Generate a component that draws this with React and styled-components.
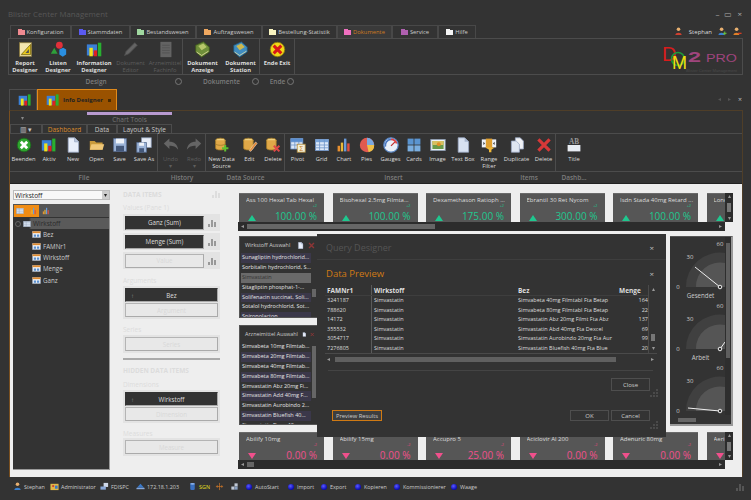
import React from "react";
import styled, { createGlobalStyle } from "styled-components";

const Global = createGlobalStyle`
  html, body { margin: 0; padding: 0; background: #333; }
  * { box-sizing: border-box; }
  body { font-family: "Open Sans", "Liberation Sans", sans-serif; }
`;

// --- icons, all on a 20x20 grid ---
const icons = {
  report: <><rect x="3" y="2" width="14" height="16" fill="#f3e6b0" stroke="#8a7a40" /><path d="M5 16 L16 4 V16Z" fill="#e8c81e" stroke="#7a6a10" /><path d="M10 14 L14 9.5 V14Z" fill="#555" /></>,
  lists: <><circle cx="11" cy="5" r="4" fill="#e0303a" /><path d="M1 15 L5 8 L9 15Z" fill="#2ea03a" /><path d="M11 10 L15.500 8 L19 10 V16 L15 18.500 L11 16Z" fill="#2a8fe0" /></>,
  info: <><rect x="1" y="4" width="12" height="13" fill="#3a80d8" /><rect x="4" y="8" width="4" height="10" fill="#f2e21a" /><rect x="9" y="11" width="4" height="7" fill="#e02020" /><rect x="14" y="2" width="4" height="16" fill="#28b030" /></>,
  pencil: <path d="M3 17 L5 12 L15 2 L18 5 L8 15Z" fill="#8c8c8c" stroke="#666" />,
  doc: <><rect x="4" y="1" width="13" height="18" fill="#8b8b8b" /><path d="M6 5H15M6 8H15M6 11H15M6 14H15" stroke="#6a6a6a" /></>,
  bookGreen: <><path d="M2 5 L11 1 L18 7 V13 L9 19 L2 13Z" fill="#6f8f3a" stroke="#3f5a1c" /><path d="M5 6 L11 3 L15 7 L9 11Z" fill="#b7c76a" /><path d="M3 13 L9 17 L17 12" stroke="#e0d8a0" fill="none" /></>,
  bookBlue: <><path d="M2 5 L11 1 L18 7 V13 L9 19 L2 13Z" fill="#3f8cc0" stroke="#20506f" /><path d="M5 6 L11 3 L15 7 L9 11Z" fill="#cdb84e" /><path d="M3 13 L9 17 L17 12" stroke="#e0d8a0" fill="none" /></>,
  exit: <><circle cx="10" cy="10" r="8.500" fill="#f0d818" stroke="#8a7a10" /><path d="M5.500 5.500 L14.500 14.500M14.500 5.500 L5.500 14.500" stroke="#d81818" strokeWidth="3.500" /></>,
  close: <><circle cx="10" cy="10" r="8.500" fill="#2fa52f" stroke="#1c6a1c" /><path d="M6 6 L14 14M14 6 L6 14" stroke="#fff" strokeWidth="3.500" /></>,
  page: <><path d="M4 1 H12 L17 6 V19 H4Z" fill="#e8eefa" stroke="#9aa8c4" /><path d="M12 1 V6 H17" fill="#bcc8de" stroke="#9aa8c4" /></>,
  folder: <><path d="M1 5 H7 L9 7 H17 V16 H1Z" fill="#c89a3c" /><path d="M3 9 H19 L17 16 H1Z" fill="#f0c878" /></>,
  save: <><path d="M2 2 H18 V18 H2Z" fill="#9cb4d8" stroke="#5a7094" /><rect x="5" y="2" width="10" height="6" fill="#eef2f8" /><rect x="5" y="11" width="10" height="7" fill="#44587a" /></>,
  saveAs: <><rect x="7" y="1" width="12" height="12" fill="#e8eef8" stroke="#8a9ab4" /><rect x="1" y="7" width="12" height="12" fill="#9cb4d8" stroke="#5a7094" /><rect x="4" y="7" width="6" height="4" fill="#eef2f8" /><rect x="4" y="14" width="6" height="5" fill="#44587a" /></>,
  undo: <path d="M1 8 L8 2 V6 C14 6 18 9 19 16 C16 12 13 11 8 11 V15Z" fill="#8e8e8e" />,
  redo: <path d="M19 8 L12 2 V6 C6 6 2 9 1 16 C4 12 7 11 12 11 V15Z" fill="#8e8e8e" />,
  dbAdd: <><ellipse cx="8" cy="4" rx="6" ry="2.500" fill="#f0d080" stroke="#a07828" /><path d="M2 4 V14 C2 17 14 17 14 14 V4" fill="#e0a848" stroke="#a07828" /><path d="M2 8.500 C4 11 12 11 14 8.500" fill="none" stroke="#a07828" /><path d="M14 10 V18M10 14 H18" stroke="#60c030" strokeWidth="2.500" /></>,
  dbEdit: <><ellipse cx="8" cy="4" rx="6" ry="2.500" fill="#f0d080" stroke="#a07828" /><path d="M2 4 V14 C2 17 14 17 14 14 V4" fill="#e0a848" stroke="#a07828" /><path d="M9 17 L17 6 L19 8 L11 18Z" fill="#e08838" stroke="#fff" strokeWidth=".5" /></>,
  dbDel: <><ellipse cx="8" cy="4" rx="6" ry="2.500" fill="#f0d080" stroke="#a07828" /><path d="M2 4 V14 C2 17 14 17 14 14 V4" fill="#e0a848" stroke="#a07828" /><path d="M11 11 L18 18M18 11 L11 18" stroke="#e04848" strokeWidth="2.500" /></>,
  pivot: <><rect x="1" y="2" width="15" height="13" fill="#dce8f8" stroke="#6f94c8" /><path d="M1 6H16M6 2V15M11 2V15M1 10H16" stroke="#6f94c8" /><rect x="1" y="2" width="15" height="4" fill="#5a8ed0" /><rect x="9" y="9" width="10" height="10" fill="#f4f0d8" stroke="#b08838" /><text x="14" y="17.500" fontSize="8" fill="#c87818" textAnchor="middle">Σ</text></>,
  grid: <><rect x="2" y="3" width="16" height="14" fill="#dce8f8" stroke="#6f94c8" /><rect x="2" y="3" width="16" height="3.500" fill="#7aa4d8" /><path d="M2 10H18M2 13.500H18M7 3V17M13 3V17" stroke="#6f94c8" /></>,
  chart: <><rect x="2" y="11" width="3" height="7" fill="#e89030" /><rect x="6" y="7" width="3" height="11" fill="#e8b838" /><rect x="10" y="2" width="3" height="16" fill="#6a9ad8" /><rect x="14" y="8" width="3" height="10" fill="#e05040" /></>,
  pies: <><circle cx="10" cy="10" r="9" fill="#e05a50" /><path d="M10 10 L10 1 A9 9 0 0 1 19 10Z" fill="#7aa8e0" /><path d="M10 10 L19 10 A9 9 0 0 1 12 19Z" fill="#f0c048" /></>,
  gauges: <><circle cx="10" cy="10" r="9" fill="#eaf0f8" stroke="#5a88c8" strokeWidth="1.500" /><path d="M3 12 A7.500 7.500 0 0 1 10 3" stroke="#4a78c0" strokeWidth="2" fill="none" /><path d="M10 3 A7.500 7.500 0 0 1 17 8" stroke="#e04040" strokeWidth="2" fill="none" /><path d="M10 11 L15 6" stroke="#c03030" strokeWidth="1.500" /></>,
  cards: <><rect x="2" y="2" width="7.500" height="7.500" fill="#5a94d0" /><rect x="10.500" y="2" width="7.500" height="7.500" fill="#5a94d0" /><rect x="2" y="10.500" width="7.500" height="7.500" fill="#7aaee0" /><rect x="10.500" y="10.500" width="7.500" height="7.500" fill="#7aaee0" /></>,
  image: <><rect x="1" y="3" width="18" height="14" fill="#eef2f6" stroke="#8a9ab0" /><rect x="3" y="5" width="14" height="10" fill="#6a9a48" /><rect x="3" y="5" width="14" height="5" fill="#d8c060" /><circle cx="11" cy="9" r="2.500" fill="#e09028" /></>,
  textBox: <><path d="M4 1 H12 L17 6 V19 H4Z" fill="#d8e2f2" stroke="#9aa8c4" /><path d="M12 1 V6 H17" fill="#aab8d0" /></>,
  range: <><rect x="1" y="3" width="18" height="10" fill="#eef2f8" /><rect x="6" y="2" width="8" height="12" fill="#e0a030" /><path d="M5 8 L3 6V10Z M15 8 L17 6V10Z" fill="#333" /><path d="M6 13 H17 L13 16 V19 H10 V16Z" fill="#f0b838" /></>,
  dup: <><path d="M8 1 H14 L18 5 V15 H8Z" fill="#f0f2f6" stroke="#9aa8c4" /><path d="M3 5 H9 L13 9 V19 H3Z" fill="#dfe6f2" stroke="#9aa8c4" /></>,
  del: <path d="M3 3 L17 17M17 3 L3 17" stroke="#d83838" strokeWidth="4" />,
  title: <><text x="10" y="9" fontSize="9" fontWeight="700" fill="#999" textAnchor="middle" fontFamily="Liberation Serif, serif">AB</text><rect x="2" y="10" width="16" height="8" fill="#e8ecf2" /></>,
  user: <><circle cx="10" cy="5" r="4" fill="#e8b070" /><path d="M3 18 C3 11 17 11 17 18Z" fill="#3a80d0" /></>,
  userRed: <><circle cx="10" cy="5" r="4" fill="#e8b070" /><path d="M3 18 C3 11 17 11 17 18Z" fill="#d04030" /></>,
  userAdd: <><circle cx="8" cy="5" r="4" fill="#e8b070" /><path d="M1 18 C1 11 14 11 14 18Z" fill="#3a80d0" /><path d="M15 10V18M11 14H19" stroke="#70d040" strokeWidth="2" /></>,
  userOut: <><circle cx="8" cy="5" r="4" fill="#e8b070" /><path d="M1 18 C1 11 14 11 14 18Z" fill="#e08028" /><path d="M11 14H19" stroke="#f04020" strokeWidth="2.500" /></>,
  admin: <><rect x="1" y="4" width="18" height="14" fill="#e0b848" /><circle cx="7" cy="9" r="2.500" fill="#d04030" /><rect x="11" y="8" width="6" height="7" fill="#3a78c8" /></>,
  server: <><rect x="8" y="2" width="10" height="9" fill="#cfd8e8" /><rect x="1" y="10" width="12" height="7" fill="#8aa8d8" /></>,
  net: <><path d="M10 4 L18 13 H2Z" fill="#3a78c8" /><rect x="1" y="13" width="18" height="3" fill="#8aa8d8" /></>,
  db: <><rect x="5" y="2" width="10" height="16" rx="3" fill="#3a70c0" /><ellipse cx="10" cy="4" rx="5" ry="2" fill="#8ab0e8" /></>,
  plug: <path d="M10 2V18M2 10H18M5 7V13M15 7V13" stroke="#d07828" strokeWidth="1.500" fill="none" />,
  blocks: <><rect x="10" y="3" width="7" height="7" fill="#c0c8d4" /><rect x="3" y="10" width="7" height="7" fill="#c0c8d4" /><rect x="10" y="10" width="7" height="7" fill="#8aa0c0" /></>,
  tree: <><rect x="1" y="3" width="18" height="14" fill="#f0f2f6" stroke="#8a9ab0" /><rect x="1" y="3" width="18" height="4" fill="#e08c30" /><rect x="4" y="10" width="5" height="5" fill="#5a90d0" /><rect x="11" y="10" width="5" height="5" fill="#5a90d0" /></>,
  table: <><rect x="1" y="3" width="18" height="14" fill="#dce6f4" stroke="#8a9ab0" /><path d="M1 7H19M1 12H19M8 3V17" stroke="#8a9ab0" /></>,
};

const Icon = ({ name, size = 16, dim }) => (
  <svg width={size} height={size} viewBox="0 0 20 20" style={dim ? { opacity: 0.55 } : undefined}>
    {icons[name]}
  </svg>
);

const Folder = ({ color }) => (
  <svg width="7" height="6" viewBox="0 0 7 6">
    <rect y="0" width="7" height="6" fill={color} />
    <rect y="0" width="3" height="1" fill="#333" x="4" />
  </svg>
);

const Bars = ({ color = "#999" }) => (
  <svg width="8" height="8" viewBox="0 0 8 8">
    <path d="M0 5h2v3H0zM3 1h2v7H3zM6 3h2v5H6z" fill={color} />
  </svg>
);

const arrowPaths = { up: "M0 3 L1.500 0 L3 3Z", down: "M0 0 L3 0 L1.500 3Z", left: "M3 0 V3 L0 1.500Z", right: "M0 0 V3 L3 1.500Z" };

const Arrow = ({ dir, color = "#999" }) => (
  <svg width="3" height="3" viewBox="0 0 3 3" style={{ flex: "none" }}>
    <path d={arrowPaths[dir]} fill={color} />
  </svg>
);

const Grip = () => (
  <svg width="8" height="8" viewBox="0 0 8 8">
    <path d="M6 0h2v2H6zM3 3h2v2H3zM6 3h2v2H6zM0 6h2v2H0zM3 6h2v2H3zM6 6h2v2H6z" fill="#4a4a4a" />
  </svg>
);

// --- frame ---
const Page = styled.div`
  position: relative;
  width: 751px;
  height: 500px;
  overflow: hidden;
  background: #333;
  display: flex;
  flex-direction: column;
  color: #ddd;
  font-size: 6.5px;
`;

const TitleBar = styled.div`
  height: 25px;
  flex: none;
  display: flex;
  align-items: center;
  justify-content: space-between;
  padding: 3px 9px 0 8px;
  color: #575757;
  font-size: 7.800px;
`;

const WinButtons = styled.div`
  display: flex;
  gap: 5px;
  color: #aaa;
  font-size: 8px;
  line-height: 8px;
`;

const MenuRow = styled.div`
  height: 13px;
  flex: none;
  display: flex;
  align-items: flex-end;
  padding-left: 10px;
`;

const MenuTab = styled.div`
  width: ${(p) => p.$w}px;
  height: 13px;
  display: flex;
  align-items: center;
  justify-content: center;
  gap: 2px;
  border: 1px solid #484848;
  border-bottom: 0;
  font-size: 5.800px;
  color: ${(p) => (p.$active ? "#d07a20" : "#ccc")};
  background: ${(p) => (p.$active ? "#3a3a3a" : "transparent")};
`;

const UserArea = styled.div`
  margin-left: auto;
  margin-right: 9px;
  display: flex;
  align-items: center;
  gap: 6px;
  font-size: 6px;
  color: #ddd;
  height: 13px;
`;

const TopRibbon = styled.div`
  height: 37px;
  flex: none;
  margin: 0 8px;
  border: 1px solid #4c4c4c;
  display: flex;
  position: relative;
`;

const Group = styled.div`
  display: flex;
  width: ${(p) => p.$w}px;
  border-right: 1px solid ${(p) => (p.$noline ? "transparent" : "#4c4c4c")};
  flex: none;
`;

const ToolButton = styled.div`
  width: ${(p) => p.$w}px;
  flex: none;
  display: flex;
  flex-direction: column;
  align-items: center;
  text-align: center;
  padding-top: ${(p) => p.$pad}px;
  line-height: 7px;
  font-size: 5.800px;
  font-weight: ${(p) => (p.$bold ? 700 : 400)};
  color: ${(p) => (p.$off ? "#5e5e5e" : "#ddd")};
  white-space: nowrap;
  svg { margin-bottom: ${(p) => p.$gap}px; flex: none; }
`;

const CaptionRow = styled.div`
  height: ${(p) => p.$h}px;
  flex: none;
  display: flex;
  margin: ${(p) => p.$m || 0};
`;

const Caption = styled.div`
  width: ${(p) => p.$w}px;
  flex: none;
  display: flex;
  align-items: center;
  justify-content: center;
  position: relative;
  font-size: 6.500px;
  font-weight: 600;
  color: #7c7c7c;
  white-space: nowrap;
`;

const Collapse = styled.i`
  position: absolute;
  right: 1px;
  top: 3px;
  width: 7px;
  height: 7px;
  border: 1px solid #777;
  border-radius: 50%;
`;

const Logo = styled.svg`
  position: absolute;
  right: 0;
  top: 2px;
`;

const DocTabs = styled.div`
  height: 22px;
  flex: none;
  display: flex;
  align-items: flex-end;
  padding-left: 9px;
  padding-right: 9px;
`;

const DocTab = styled.div`
  width: ${(p) => p.$w}px;
  height: 21px;
  display: flex;
  align-items: center;
  padding-left: 8px;
  gap: 3px;
  font-size: 6px;
  font-weight: 700;
  color: #222;
  border: 1px solid ${(p) => (p.$active ? "#e08a1c" : "#4c4c4c")};
  border-bottom: 0;
  background: ${(p) => (p.$active ? "#9a5200" : "transparent")};
  em { margin-left: auto; margin-right: 5px; width: 3px; height: 3px; background: #4a2a00; }
`;

const DocArrows = styled.div`
  margin-left: auto;
  align-self: center;
  display: flex;
  align-items: center;
  gap: 7px;
  font-size: 7px;
  b { color: #bbb; font-weight: 400; }
`;

const Panel = styled.div`
  height: 367px;
  flex: none;
  margin: 0 8px 0 9px;
  border-top: 1px solid #4f3e28;
  border-right: 1px solid #4f3e28;
  border-left: 1px solid #7a5020;
  display: flex;
  flex-direction: column;
`;

const ChartRow = styled.div`
  height: 13px;
  flex: none;
  display: flex;
  align-items: flex-start;
  padding-left: 11px;
  svg { margin-top: 6px; margin-right: 63px; }
`;

const ChartStrip = styled.div`
  width: 85px;
  height: 13px;
  border-top: 3px solid #b89ad0;
  margin-top: 1px;
  text-align: center;
  font-size: 6.500px;
  color: #777;
  line-height: 9px;
`;

const ContextTabs = styled.div`
  height: 10px;
  flex: none;
  display: flex;
  border-bottom: 1px solid #4c4c4c;
`;

const ContextTab = styled.div`
  width: ${(p) => p.$w}px;
  display: flex;
  align-items: center;
  justify-content: center;
  font-size: 6.500px;
  color: ${(p) => (p.$active ? "#d98a2b" : "#c8c8c8")};
  border: 1px solid #4c4c4c;
  border-bottom: 0;
`;

const LowerRibbon = styled.div`
  height: 38px;
  flex: none;
  display: flex;
  border-bottom: 1px solid #4c4c4c;
`;

const Content = styled.div`
  flex: 1;
  min-height: 0;
  background: #eee;
  border-top: 1px solid #222;
  display: flex;
  overflow: hidden;
`;

// --- left side ---
const LeftColumn = styled.div`
  width: 97px;
  margin-left: 3px;
  flex: none;
  padding-top: 6px;
  display: flex;
  flex-direction: column;
`;

const Combo = styled.div`
  height: 10px;
  background: #f8f8f8;
  border: 1px solid #bbb;
  display: flex;
  align-items: center;
  justify-content: space-between;
  padding-left: 1px;
  color: #222;
  font-size: 6.500px;
  span { width: 7px; height: 8px; background: #ccc; display: flex; align-items: center; justify-content: center; }
`;

const Tree = styled.div`
  margin-top: 4px;
  height: 266px;
  background: #333;
  border-right: 1px solid #999;
  border-bottom: 1px solid #999;
`;

const TreeBar = styled.div`
  height: 13px;
  background: #555;
  display: flex;
  align-items: center;
  padding-left: 1px;
  gap: 1px;
`;

const TreeTool = styled.div`
  width: ${(p) => (p.$active ? 25 : 12)}px;
  height: 12px;
  background: ${(p) => (p.$active ? "#f08c14" : "transparent")};
  display: flex;
  align-items: center;
  justify-content: space-around;
`;

const TreeRoot = styled.div`
  margin-top: 1px;
  height: 11px;
  display: flex;
  align-items: center;
  padding-left: 2px;
  gap: 2px;
  background: linear-gradient(to right, #333 16px, #5a5a5a 18px);
  color: #2a2a2a;
  font-size: 6.500px;
  i { width: 6px; height: 6px; border: 1px solid #666; border-radius: 50%; }
`;

const TreeLeaf = styled.div`
  height: 11.400px;
  display: flex;
  align-items: center;
  padding-left: 19px;
  gap: 2px;
  color: #ccc;
  font-size: 6.200px;
  &:first-of-type { margin-top: 1px; }
`;

const MidColumn = styled.div`
  width: 128px;
  flex: none;
  padding: 5px 18px 0 13px;
`;

const Section = styled.div`
  height: 10px;
  margin-top: ${(p) => p.$top}px;
  display: flex;
  align-items: center;
  justify-content: space-between;
  font-size: 6.500px;
  font-weight: ${(p) => (p.$bold ? 700 : 400)};
  color: #dcdcdc;
  white-space: nowrap;
`;

const SlotGroup = styled.div`
  margin-top: ${(p) => p.$top ?? 0}px;
  background: #e3e3e3;
  padding: 2px;
  display: flex;
  flex-direction: column;
  gap: 1px;
`;

const ValueRow = styled.div`
  margin-top: ${(p) => p.$top}px;
  background: #e3e3e3;
  height: 17px;
  padding: 1px 4px 1px 2px;
  display: flex;
  align-items: center;
  justify-content: space-between;
`;

const ItemButton = styled.div`
  height: ${(p) => p.$h || 14}px;
  width: ${(p) => (p.$short ? "79px" : "100%")};
  position: relative;
  display: flex;
  align-items: center;
  justify-content: center;
  font-size: 6.200px;
  color: ${(p) => (p.$empty ? "#d8d8d8" : "#ddd")};
  background: ${(p) => (p.$empty ? "#e8e8e8" : "#333")};
  border: 1px solid ${(p) => (p.$empty ? "#b4b4b4" : "#333")};
  border-right-color: #aaa;
  border-bottom-color: #aaa;
  i { position: absolute; left: 5px; font-style: normal; color: #999; }
`;

const Divider = styled.div`
  height: 2px;
  margin-top: 5px;
  background: #aaa;
`;

// --- dashboard ---
const Canvas = styled.div`
  flex: 1;
  min-width: 0;
  padding: 9px 0 0 0;
`;

const CardBlock = styled.div`
  width: 495px;
  margin-top: ${(p) => p.$top || 0}px;
  display: grid;
  grid-template-columns: 487px 8px;
  grid-template-rows: ${(p) => p.$rows};
`;

const CardStrip = styled.div`
  display: flex;
  gap: 8.500px;
  padding-left: 1px;
  overflow: hidden;
  background: #eee;
`;

const Card = styled.div`
  width: 85px;
  height: 100%;
  flex: none;
  background: #565656;
  border-top: 1px solid #6a6a6a;
  padding: 2px 3px 0 7px;
  position: relative;
  overflow: hidden;
`;

const CardTitle = styled.div`
  font-size: 6px;
  line-height: 8px;
  color: #dcdcdc;
  white-space: nowrap;
  overflow: hidden;
`;

const CardDelta = styled.div`
  font-size: 3.800px;
  line-height: 4px;
  text-align: right;
  padding-right: 4px;
  color: ${(p) => p.$color};
`;

const CardValue = styled.div`
  position: absolute;
  right: 7px;
  bottom: ${(p) => p.$b}px;
  font-size: 10px;
  line-height: 10px;
  color: ${(p) => p.$color};
  white-space: nowrap;
`;

const Triangle = styled.span`
  position: absolute;
  left: 9px;
  bottom: ${(p) => p.$b}px;
  width: 0;
  height: 0;
  border-left: 4.500px solid transparent;
  border-right: 4.500px solid transparent;
  ${(p) => (p.$down ? `border-top: 6px solid #f0508c;` : `border-bottom: 6px solid #1fc78f;`)}
`;

const VScroll = styled.div`
  background: #2c2c2c;
  display: flex;
  flex-direction: column;
  align-items: center;
  justify-content: space-between;
  padding: 2px 0;
  b { width: 4px; height: ${(p) => p.$thumb}px; background: #777; }
`;

const HScroll = styled.div`
  grid-column: 1;
  height: 9px;
  background: #2c2c2c;
  display: flex;
  align-items: center;
  padding: 0 3px;
  b { width: ${(p) => p.$thumb}px; height: 5px; background: #666; margin: 0 auto 0 3px; }
`;

const MiddleRow = styled.div`
  width: 495px;
  height: 189px;
  margin-top: 5px;
  padding-left: 1px;
  display: flex;
  justify-content: space-between;
`;

const ListColumn = styled.div`
  width: 79px;
  display: flex;
  flex-direction: column;
  gap: 7px;
`;

const ListPanel = styled.div`
  height: ${(p) => p.$h}px;
  background: #333;
  border: 1px solid #555;
  display: flex;
  flex-direction: column;
  overflow: hidden;
`;

const ListHead = styled.div`
  height: 16px;
  flex: none;
  display: flex;
  align-items: center;
  padding: 0 2px 0 5px;
  gap: 4px;
  font-size: 5.400px;
  color: #ccc;
  white-space: nowrap;
  span { margin-right: auto; }
`;

const ListBody = styled.div`
  flex: 1;
  min-height: 0;
  display: flex;
  overflow: hidden;
`;

const ListItems = styled.div`
  flex: 1;
  min-width: 0;
  padding-left: 1px;
`;

const ListItem = styled.div`
  height: 9.900px;
  line-height: 9.900px;
  font-size: 5.500px;
  padding-left: 1px;
  white-space: nowrap;
  overflow: hidden;
  color: ${(p) => (p.$on ? "#333" : "#e4e4e4")};
  background: ${(p) => (p.$on ? "#6a6a6a" : p.$alt ? "#3b384a" : "#333")};
`;

const ListScroll = styled.div`
  width: 6px;
  flex: none;
  display: flex;
  flex-direction: column;
  padding-top: ${(p) => p.$top}px;
  align-items: center;
  b { width: 4px; height: ${(p) => p.$thumb}px; background: #666; }
`;

const GaugePanel = styled.div`
  width: 63px;
  height: 190px;
  background: #333;
  border-right: 2px solid #999;
  border-bottom: 2px solid #999;
  border-top: 1px solid #555;
  display: grid;
  grid-template-columns: 55px 6px;
  grid-template-rows: 1fr 9px;
  overflow: hidden;
`;

const GaugeList = styled.div`
  display: flex;
  flex-direction: column;
  overflow: hidden;
`;

const GaugeItem = styled.div`
  height: 62px;
  flex: none;
  text-align: center;
  font-size: 6.200px;
  line-height: 7px;
  color: #ccc;
  svg { display: block; }
  span { display: block; padding-left: 6px; }
`;

const GaugeScroll = styled.div`
  background: #2e2e2e;
  display: flex;
  justify-content: center;
  padding-top: 6px;
  b { width: 4px; height: 115px; background: #5e5e5e; }
`;

const GaugeHScroll = styled.div`
  grid-column: 1 / 3;
  display: flex;
  align-items: center;
  padding-left: 8px;
  b { width: 18px; height: 4px; background: #666; }
`;

// --- query dialog, floats over the dashboard ---
const Dialog = styled.div`
  position: absolute;
  left: 317px;
  top: 234px;
  width: 349px;
  height: 203px;
  background: #333;
  display: flex;
  flex-direction: column;
`;

const DialogTitle = styled.div`
  height: 26px;
  flex: none;
  border-bottom: 1px solid #3e3e3e;
  display: flex;
  align-items: center;
  justify-content: space-between;
  padding: 2px 12px 0 9px;
  font-size: 9px;
  color: #555;
  span { color: #bbb; font-size: 8px; }
`;

const PreviewTitle = styled(DialogTitle)`
  height: 24px;
  border: 0;
  color: #d07a14;
  font-size: 9.500px;
  padding-top: 2px;
`;

const TableWrap = styled.div`
  margin: 1px 9px 0 8px;
  height: 69px;
  display: flex;
  border-bottom: 1px solid #4a4a4a;
`;

const Table = styled.div`
  flex: 1;
  min-width: 0;
  display: flex;
  flex-direction: column;
`;

const TRow = styled.div`
  display: grid;
  grid-template-columns: 46px 145px 101px 31px;
  height: ${(p) => (p.$head ? 11 : 9.500)}px;
  line-height: ${(p) => (p.$head ? 11 : 9.500)}px;
  font-size: ${(p) => (p.$head ? 6.500 : 5.500)}px;
  font-weight: ${(p) => (p.$head ? 700 : 400)};
  color: #ddd;
  border-bottom: ${(p) => (p.$head ? "1px solid #3e3e3e" : 0)};
  white-space: nowrap;
`;

const TCell = styled.div`
  padding-left: 2px;
  overflow: hidden;
  border-left: ${(p) => (p.$line ? "1px solid #5a5a5a" : 0)};
  text-align: ${(p) => (p.$right ? "right" : "left")};
`;

const TableScroll = styled.div`
  width: 9px;
  flex: none;
  border-left: 1px solid #4a4a4a;
  display: flex;
  flex-direction: column;
  align-items: center;
  justify-content: space-between;
  padding: 3px 0;
  b { width: 4px; height: 7px; background: #777; margin-top: 36px; }
`;

const TableH = styled.div`
  margin: 2px 9px 0 8px;
  height: 6px;
  display: flex;
  align-items: center;
  padding-left: 2px;
  b { width: 281px; height: 5px; background: #606060; margin-left: 5px; }
  svg:last-child { margin-left: auto; margin-right: 3px; }
`;

const DialogLine = styled.div`
  margin: 8px 13px 0 11px;
  height: 1px;
  background: #444;
`;

const CloseRow = styled.div`
  display: flex;
  justify-content: flex-end;
  padding: 7px 16px 0 0;
`;

const DialogBtn = styled.div`
  width: 39px;
  height: ${(p) => p.$h || 11}px;
  font-size: 6px;
  color: #ccc;
  display: flex;
  align-items: center;
  justify-content: center;
  border: 1px solid #4e4e4e;
  white-space: nowrap;
`;

const DialogFoot = styled.div`
  display: flex;
  align-items: center;
  gap: 2px;
  padding: 19px 16px 0 15px;
`;

const PreviewBtn = styled(DialogBtn)`
  width: 50px;
  margin-right: auto;
  border: 1px solid #d07a14;
  background: #3e3e3e;
  font-size: 5.800px;
`;

const DialogGrip = styled.div`
  position: absolute;
  right: 8px;
  bottom: ${(p) => p.$b}px;
  line-height: 0;
`;

// --- status bar ---
const StatusBar = styled.div`
  flex: 1;
  margin-top: 3px;
  display: flex;
  align-items: flex-start;
  padding: 2px 0 0 0;
  position: relative;
  font-size: 5.400px;
  color: #ccc;
`;

const StatusItem = styled.div`
  position: absolute;
  left: ${(p) => p.$x}px;
  top: 2px;
  display: flex;
  align-items: center;
  gap: ${(p) => p.$gap ?? 2}px;
  height: 9px;
  white-space: nowrap;
  color: ${(p) => p.$color || "#ccc"};
`;

const Dot = styled.i`
  width: 6px;
  height: 6px;
  border-radius: 50%;
  background: radial-gradient(circle at 40% 35%, #5a5aff, #0808b0 70%);
  margin-right: 1px;
`;

const menus = [
  ["Konfiguration", "#f08a90", 61], ["Stammdaten", "#5a5af0", 59], ["Bestandswesen", "#a0d8a0", 66],
  ["Auftragswesen", "#f0a860", 66], ["Bestellung-Statistik", "#f8f4c0", 75], ["Dokumente", "#f070c0", 55, true],
  ["Service", "#b060b0", 46], ["Hilfe", "#f4f4f4", 38],
];

const topGroups = [
  { w: 174, items: [["Report", "Designer", "report", 32], ["Listen", "Designer", "lists", 34], ["Information", "Designer", "info", 38], ["Dokument", "Editor", "pencil", 35, true], ["Arzneimittel", "Fachinfo", "doc", 34, true]] },
  { w: 77, items: [["Dokument", "Anzeige", "bookGreen", 39], ["Dokument", "Station", "bookBlue", 37]] },
  { w: 35, items: [["Ende Exit", "", "exit", 34]] },
];

const lowGroups = [
  { w: 148, items: [["Beenden", "", "close", 27], ["Aktiv", "", "info", 24], ["New", "", "page", 24], ["Open", "", "folder", 23], ["Save", "", "save", 23], ["Save As", "", "saveAs", 26]] },
  { w: 48, items: [["Undo", "▾", "undo", 25, true], ["Redo", "▾", "redo", 22, true]] },
  { w: 79, items: [["New Data", "Source", "dbAdd", 31], ["Edit", "", "dbEdit", 25], ["Delete", "", "dbDel", 22]] },
  { w: 217, noline: true, items: [["Pivot", "", "pivot", 25], ["Grid", "", "grid", 23], ["Chart", "", "chart", 22], ["Pies", "", "pies", 23], ["Gauges", "", "gauges", 25], ["Cards", "", "cards", 22], ["Image", "", "image", 25], ["Text Box", "", "textBox", 26], ["Range", "Filter", "range", 26]] },
  { w: 54, items: [["Duplicate", "", "dup", 29], ["Delete", "", "del", 25]] },
  { w: 36, noline: true, items: [["Title", "", "title", 36]] },
];

const topCards = [
  ["Ass 100 Hexal Tab Hexal", "100.00 %"], ["Bisohexal 2.5mg Filmta...", "100.00 %"], ["Dexamethason Ratioph ...", "175.00 %"],
  ["Ebrantil 30 Ret Nycom", "300.00 %"], ["Isdn Stada 40mg Retard ...", "100.00 %"], ["Lonoc", ""],
];
const bottomCards = [
  ["Abilify 10mg", "0.00 %"], ["Abilify 15mg", "0.00 %"], ["Accupro 5", "25.00 %"],
  ["Aciclovir Al 200", "0.00 %"], ["Adenuric 80mg", "0.00 %"], ["Aerius", ""],
];

const list1 = ["Sunagliptin hydrochlorid...", "Sorbitalin hydrochlorid, S...", "Simvastatin", "Sitagliptin phosphat-1-...", "Solifenacin succinat, Soli...", "Sotalol hydrochlorid, Sot...", "Spironolacton"];
const list2 = ["Simvabeta 10mg Filmtab...", "Simvabeta 20mg Filmtab...", "Simvabeta 40mg Filmtab...", "Simvabeta 80mg Filmtab...", "Simvastatin Abz 20mg Fi...", "Simvastatin Add 40mg F...", "Simvastatin Aurobindo 2...", "Simvastatin Bluefish 40...", "Simvastatin Dexa 40mg"];

const rows = [
  ["3241187", "Simvastatin", "Simvabeta 40mg Filmtabl Fta Betap", "164"],
  ["788620", "Simvastatin", "Simvabeta 80mg Filmtabl Fta Betap", "22"],
  ["14172", "Simvastatin", "Simvastatin Abz 20mg Filmt Fta Abz", "137"],
  ["355532", "Simvastatin", "Simvastatin Abd 40mg Fta Dexcel", "69"],
  ["3054717", "Simvastatin", "Simvastatin Aurobindo 20mg Fta Aur", "99"],
  ["7276805", "Simvastatin", "Simvastatin Bluefish 40mg Fta Blue", "20"],
];

const Buttons = ({ items, bold, size, pad, gap }) =>
  items.map(([a, b, icon, w, off], i) => (
    <ToolButton key={i} $w={w} $off={off} $bold={bold && !off} $pad={pad} $gap={gap}>
      <Icon name={icon} size={size} dim={off} />
      <span>{a}</span>
      {b && <span>{b}</span>}
    </ToolButton>
  ));

const Cards = ({ data, down }) => (
  <CardStrip>
    {data.map(([title, value], i) => (
      <Card key={i}>
        <CardTitle>{title}</CardTitle>
        {value && <CardDelta $color={down ? "#e04880" : "#1fc78f"}>{down ? "-2" : "+2"}</CardDelta>}
        {value && <CardValue $b={down ? 0 : 1} $color={down ? "#f0508c" : "#1fc78f"}>{value}</CardValue>}
        {(value || i === 5) && <Triangle $down={down} $b={1} />}
      </Card>
    ))}
  </CardStrip>
);

const Gauge = ({ label, x2, y2 }) => (
  <GaugeItem>
    <svg width="55" height="55" viewBox="0 0 55 55">
      <text x="50" y="9" fontSize="6" fill="#ccc" textAnchor="middle">60</text>
      <text x="20" y="22" fontSize="6" fill="#ccc" textAnchor="middle">30</text>
      <text x="8" y="52" fontSize="6" fill="#ccc" textAnchor="middle">0</text>
      <path d="M16 50 A34 34 0 0 1 55 16 V50Z" fill="#404040" />
      <path d="M26 50 A24 24 0 0 1 55 26 V50Z" fill="#555" />
      <path d={`M50 50 L${x2} ${y2}`} stroke="#eee" strokeWidth="1" />
      <circle cx="50" cy="50" r="1.800" fill="#333" stroke="#eee" />
    </svg>
    <span>{label}</span>
  </GaugeItem>
);

export default function App() {
  return (
    <Page>
      <Global />
      <TitleBar>
        <span>Blister Center Management</span>
        <WinButtons><span>–</span><span>▭</span><span>×</span></WinButtons>
      </TitleBar>

      <MenuRow>
        {menus.map(([name, color, w, active]) => (
          <MenuTab key={name} $w={w} $active={active}><Folder color={color} />{name}</MenuTab>
        ))}
        <UserArea>
          <Icon name="userRed" size={9} />
          <span>Stephan</span>
          <Icon name="userAdd" size={9} />
          <Icon name="userOut" size={9} />
        </UserArea>
      </MenuRow>

      <TopRibbon>
        {topGroups.map((g, i) => (
          <Group key={i} $w={g.w}><Buttons items={g.items} bold size={17} pad={2} gap={2} /></Group>
        ))}
        <Logo width="80" height="34" viewBox="0 0 80 34">
          <text x="0" y="20" fontSize="20" fill="#d81c1c" fontFamily="Liberation Sans">D</text>
          <circle cx="16" cy="18" r="6.500" fill="none" stroke="#1f9a3a" strokeWidth="1.500" />
          <text x="10" y="28" fontSize="18" fill="#f0e010" fontFamily="Liberation Sans">M</text>
          <text x="26" y="21" fontSize="15" fontWeight="700" fill="#a0457e" fontFamily="Liberation Sans" textLength="13" lengthAdjust="spacingAndGlyphs">2</text>
          <text x="44" y="21" fontSize="10" fill="#a0457e" fontFamily="Liberation Sans" textLength="31" lengthAdjust="spacingAndGlyphs">PRO</text>
          <text x="24" y="31" fontSize="4.200" fill="#4a4a4a" fontFamily="Liberation Sans">Blister Center Management</text>
        </Logo>
      </TopRibbon>
      <CaptionRow $h={13} $m="0 0 0 9px">
        <Caption $w={174}>Design<Collapse /></Caption>
        <Caption $w={77}>Dokumente<Collapse /></Caption>
        <Caption $w={35}>Ende<Collapse /></Caption>
      </CaptionRow>

      <DocTabs>
        <DocTab $w={28}><Icon name="info" size={14} /></DocTab>
        <DocTab $w={80} $active><Icon name="info" size={14} />Info Designer<em /></DocTab>
        <DocArrows><Arrow dir="left" color="#555" /><Arrow dir="right" color="#555" /><b>×</b></DocArrows>
      </DocTabs>

      <Panel>
        <ChartRow>
          <Arrow dir="down" color="#888" />
          <ChartStrip>Chart Tools</ChartStrip>
        </ChartRow>
        <ContextTabs>
          <ContextTab $w={32}>▥ ▾</ContextTab>
          <ContextTab $w={45} $active>Dashboard</ContextTab>
          <ContextTab $w={30}>Data</ContextTab>
          <ContextTab $w={55}>Layout &amp; Style</ContextTab>
        </ContextTabs>
        <LowerRibbon>
          {lowGroups.map((g, i) => (
            <Group key={i} $w={g.w} $noline={g.noline}><Buttons items={g.items} size={16} pad={3} gap={3} /></Group>
          ))}
        </LowerRibbon>
        <CaptionRow $h={11}>
          {[["File", 148], ["History", 48], ["Data Source", 79], ["Insert", 217], ["Items", 54], ["Dashb...", 36]].map(([t, w]) => (
            <Caption key={t} $w={w}>{t}</Caption>
          ))}
        </CaptionRow>

        <Content>
          <LeftColumn>
            <Combo>Wirkstoff<span><Arrow dir="down" color="#222" /></span></Combo>
            <Tree>
              <TreeBar>
                <TreeTool $active><Icon name="table" size={8} /><Icon name="chart" size={8} /></TreeTool>
                <TreeTool><Icon name="chart" size={8} /></TreeTool>
              </TreeBar>
              <TreeRoot><i /><Icon name="table" size={8} />Wirkstoff</TreeRoot>
              {["Bez", "FAMNr1", "Wirkstoff", "Menge", "Ganz"].map((f) => (
                <TreeLeaf key={f}><Icon name="tree" size={9} />{f}</TreeLeaf>
              ))}
            </Tree>
          </LeftColumn>

          <MidColumn>
            <Section $bold>DATA ITEMS <Bars color="#ddd" /></Section>
            <Section $top={3}>Values (Pane 1)</Section>
            <ValueRow $top={2}><ItemButton $short>Ganz (Sum)</ItemButton><Bars /></ValueRow>
            <ValueRow $top={2}><ItemButton $short>Menge (Sum)</ItemButton><Bars /></ValueRow>
            <ValueRow $top={2}><ItemButton $short $empty>Value</ItemButton><Bars /></ValueRow>
            <Section $top={6}>Arguments</Section>
            <SlotGroup $top={1}>
              <ItemButton><i>↑</i>Bez</ItemButton>
              <ItemButton $empty>Argument</ItemButton>
            </SlotGroup>
            <Section $top={5}>Series</Section>
            <SlotGroup $top={1}><ItemButton $empty>Series</ItemButton></SlotGroup>
            <Divider />
            <Section $top={5} $bold>HIDDEN DATA ITEMS</Section>
            <Section $top={4}>Dimensions</Section>
            <SlotGroup $top={1}>
              <ItemButton><i>↑</i>Wirkstoff</ItemButton>
              <ItemButton $empty>Dimension</ItemButton>
            </SlotGroup>
            <Section $top={5}>Measures</Section>
            <SlotGroup><ItemButton $empty>Measure</ItemButton></SlotGroup>
          </MidColumn>

          <Canvas>
            <CardBlock $rows="29px 9px">
              <Cards data={topCards} />
              <VScroll $thumb={9}><Arrow dir="up" /><b /><Arrow dir="down" /></VScroll>
              <HScroll $thumb={188}><Arrow dir="left" /><b /><Arrow dir="right" /></HScroll>
            </CardBlock>

            <MiddleRow>
              <ListColumn>
                <ListPanel $h={82}>
                  <ListHead><span>Wirkstoff Auswahl</span><Icon name="page" size={7} /><Icon name="del" size={7} dim /></ListHead>
                  <ListBody>
                    <ListItems>{list1.map((t, i) => <ListItem key={t} $on={i === 2} $alt={i % 2 === 0}>{t}</ListItem>)}</ListItems>
                    <ListScroll $top={36} $thumb={8}><b /></ListScroll>
                  </ListBody>
                </ListPanel>
                <ListPanel $h={100}>
                  <ListHead><span>Arzneimittel Auswahl</span><Icon name="page" size={7} /><Icon name="del" size={7} dim /></ListHead>
                  <ListBody>
                    <ListItems>{list2.map((t, i) => <ListItem key={i} $alt={i % 2 === 1}>{t}</ListItem>)}</ListItems>
                    <ListScroll $top={4} $thumb={52}><b /></ListScroll>
                  </ListBody>
                </ListPanel>
              </ListColumn>

              <GaugePanel>
                <GaugeList>
                  <Gauge label="Gesendet" x2="25" y2="30" />
                  <Gauge label="Arbeit" x2="55" y2="43" />
                  <Gauge label="Zurück" x2="18" y2="47" />
                </GaugeList>
                <GaugeScroll><b /></GaugeScroll>
                <GaugeHScroll><b /></GaugeHScroll>
              </GaugePanel>
            </MiddleRow>

            <CardBlock $rows="28px 9px" $top={7}>
              <Cards data={bottomCards} down />
              <VScroll $thumb={9}><Arrow dir="up" /><b /><Arrow dir="down" /></VScroll>
              <HScroll $thumb={7}><Arrow dir="left" /><b /><Arrow dir="right" /></HScroll>
            </CardBlock>
          </Canvas>
        </Content>
      </Panel>

      <StatusBar>
        <StatusItem $x={13}><Icon name="user" size={9} />Stephan</StatusItem>
        <StatusItem $x={50}><Icon name="admin" size={9} />Administrator</StatusItem>
        <StatusItem $x={100}><Icon name="server" size={9} />FDISPC</StatusItem>
        <StatusItem $x={136}><Icon name="net" size={9} />172.18.1.203</StatusItem>
        <StatusItem $x={188} $color="#e8e020"><Icon name="db" size={9} />SGN</StatusItem>
        <StatusItem $x={215}><Icon name="plug" size={9} /></StatusItem>
        <StatusItem $x={230}><Icon name="blocks" size={9} /></StatusItem>
        {[["AutoStart", 246], ["Import", 288], ["Export", 321], ["Kopieren", 355], ["Kommissionierer", 394], ["Waage", 451]].map(([t, x]) => (
          <StatusItem key={t} $x={x}><Dot />{t}</StatusItem>
        ))}
        <StatusItem $x={736} $color="#555"><Bars color="#555" /></StatusItem>
      </StatusBar>

      <Dialog>
        <DialogTitle>Query Designer<span>×</span></DialogTitle>
        <PreviewTitle>Data Preview<span>×</span></PreviewTitle>
        <TableWrap>
          <Table>
            <TRow $head>
              <TCell>FAMNr1</TCell><TCell $line>Wirkstoff</TCell><TCell>Bez</TCell><TCell>Menge</TCell>
            </TRow>
            {rows.map((r) => (
              <TRow key={r[0]}>
                <TCell>{r[0]}</TCell><TCell $line>{r[1]}</TCell><TCell>{r[2]}</TCell><TCell $right>{r[3]}</TCell>
              </TRow>
            ))}
          </Table>
          <TableScroll><Arrow dir="up" /><b /><Arrow dir="down" /></TableScroll>
        </TableWrap>
        <TableH><Arrow dir="left" /><b /><Arrow dir="right" /></TableH>
        <DialogLine />
        <CloseRow><DialogBtn $h={13}>Close</DialogBtn></CloseRow>
        <DialogGrip $b={40}><Grip /></DialogGrip>
        <DialogFoot>
          <PreviewBtn>Preview Results</PreviewBtn>
          <DialogBtn>OK</DialogBtn>
          <DialogBtn>Cancel</DialogBtn>
        </DialogFoot>
        <DialogGrip $b={8}><Grip /></DialogGrip>
      </Dialog>
    </Page>
  );
}
